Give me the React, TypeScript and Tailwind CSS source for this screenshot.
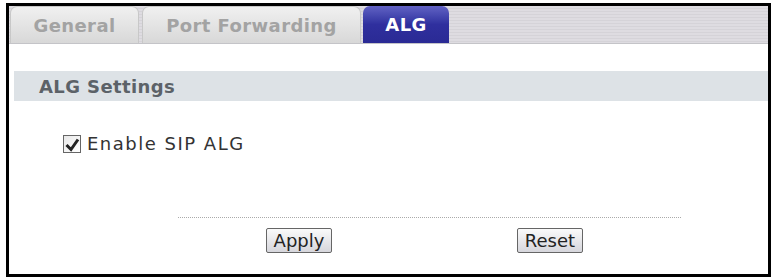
import React from "react";

export default function App() {
  const font = { fontFamily: '"DejaVu Sans", Tahoma, sans-serif' };
  return (
    <div className="w-[773px] h-[279px] bg-white relative" style={font}>
      <div className="absolute left-[6px] top-[3px] w-[765px] h-[274px] border-[3px] border-black bg-white flex flex-col">
        {/* tab bar */}
        <div className="h-[38px] flex items-end pl-[1px] border-b border-[#c4c4c8] bg-[repeating-linear-gradient(180deg,#dedce1_0px,#dedce1_2px,#d5d3d8_2px,#d5d3d8_3px)]">
          <div className="w-[129px] h-[37px] rounded-t-[7px] border border-[#c8c8c8] border-b-0 bg-gradient-to-b from-[#f0f0f0] to-[#d8d8d8] flex items-center justify-center text-[18px] font-bold text-[#a3a3a3] tracking-[0.4px]">
            General
          </div>
          <div className="ml-[3px] w-[219px] h-[37px] rounded-t-[7px] border border-[#c8c8c8] border-b-0 bg-gradient-to-b from-[#f0f0f0] to-[#d8d8d8] flex items-center justify-center text-[18px] font-bold text-[#a3a3a3] tracking-[0.4px]">
            Port Forwarding
          </div>
          <div className="ml-[2px] w-[86px] h-[37px] rounded-t-[7px] bg-gradient-to-b from-[#6262c4] via-[#2f2f9e] to-[#2a2a94] flex items-center justify-center text-[18px] font-bold text-white tracking-[0.4px]">
            ALG
          </div>
        </div>
        {/* section header */}
        <div className="mt-[27px] ml-[5px] h-[30px] bg-[#dde2e6] flex items-center pl-[25px] text-[18px] font-bold text-[#5c6268] tracking-[0.4px]">
          ALG Settings
        </div>
        {/* checkbox row */}
        <div className="mt-[29px] ml-[54px] flex items-center gap-[6px]">
          <div className="w-[18px] h-[18px] border border-[#666] bg-gradient-to-br from-[#e8e8e8] to-[#ffffff] flex items-center justify-center">
            <svg width="16" height="16" viewBox="0 0 16 16">
              <path d="M2.5 9 L7 13.5 L14 3.5" stroke="#222" strokeWidth="3" fill="none" strokeLinejoin="miter" />
            </svg>
          </div>
          <span className="text-[18px] text-[#333] tracking-[1.5px]">Enable SIP ALG</span>
        </div>
        {/* dotted line */}
        <div className="mt-[60px] ml-[169px] w-[503px] border-t border-dotted border-[#aaa]" />
        {/* buttons */}
        <div className="mt-[10px] flex">
          <button className="ml-[257px] w-[66px] h-[25px] border border-[#666] rounded-[2px] bg-gradient-to-b from-[#fafafa] to-[#d6d6dc] text-[18px] text-[#222] leading-none">
            Apply
          </button>
          <button className="ml-[185px] w-[66px] h-[25px] border border-[#666] rounded-[2px] bg-gradient-to-b from-[#fafafa] to-[#d6d6dc] text-[18px] text-[#222] leading-none">
            Reset
          </button>
        </div>
      </div>
    </div>
  );
}
